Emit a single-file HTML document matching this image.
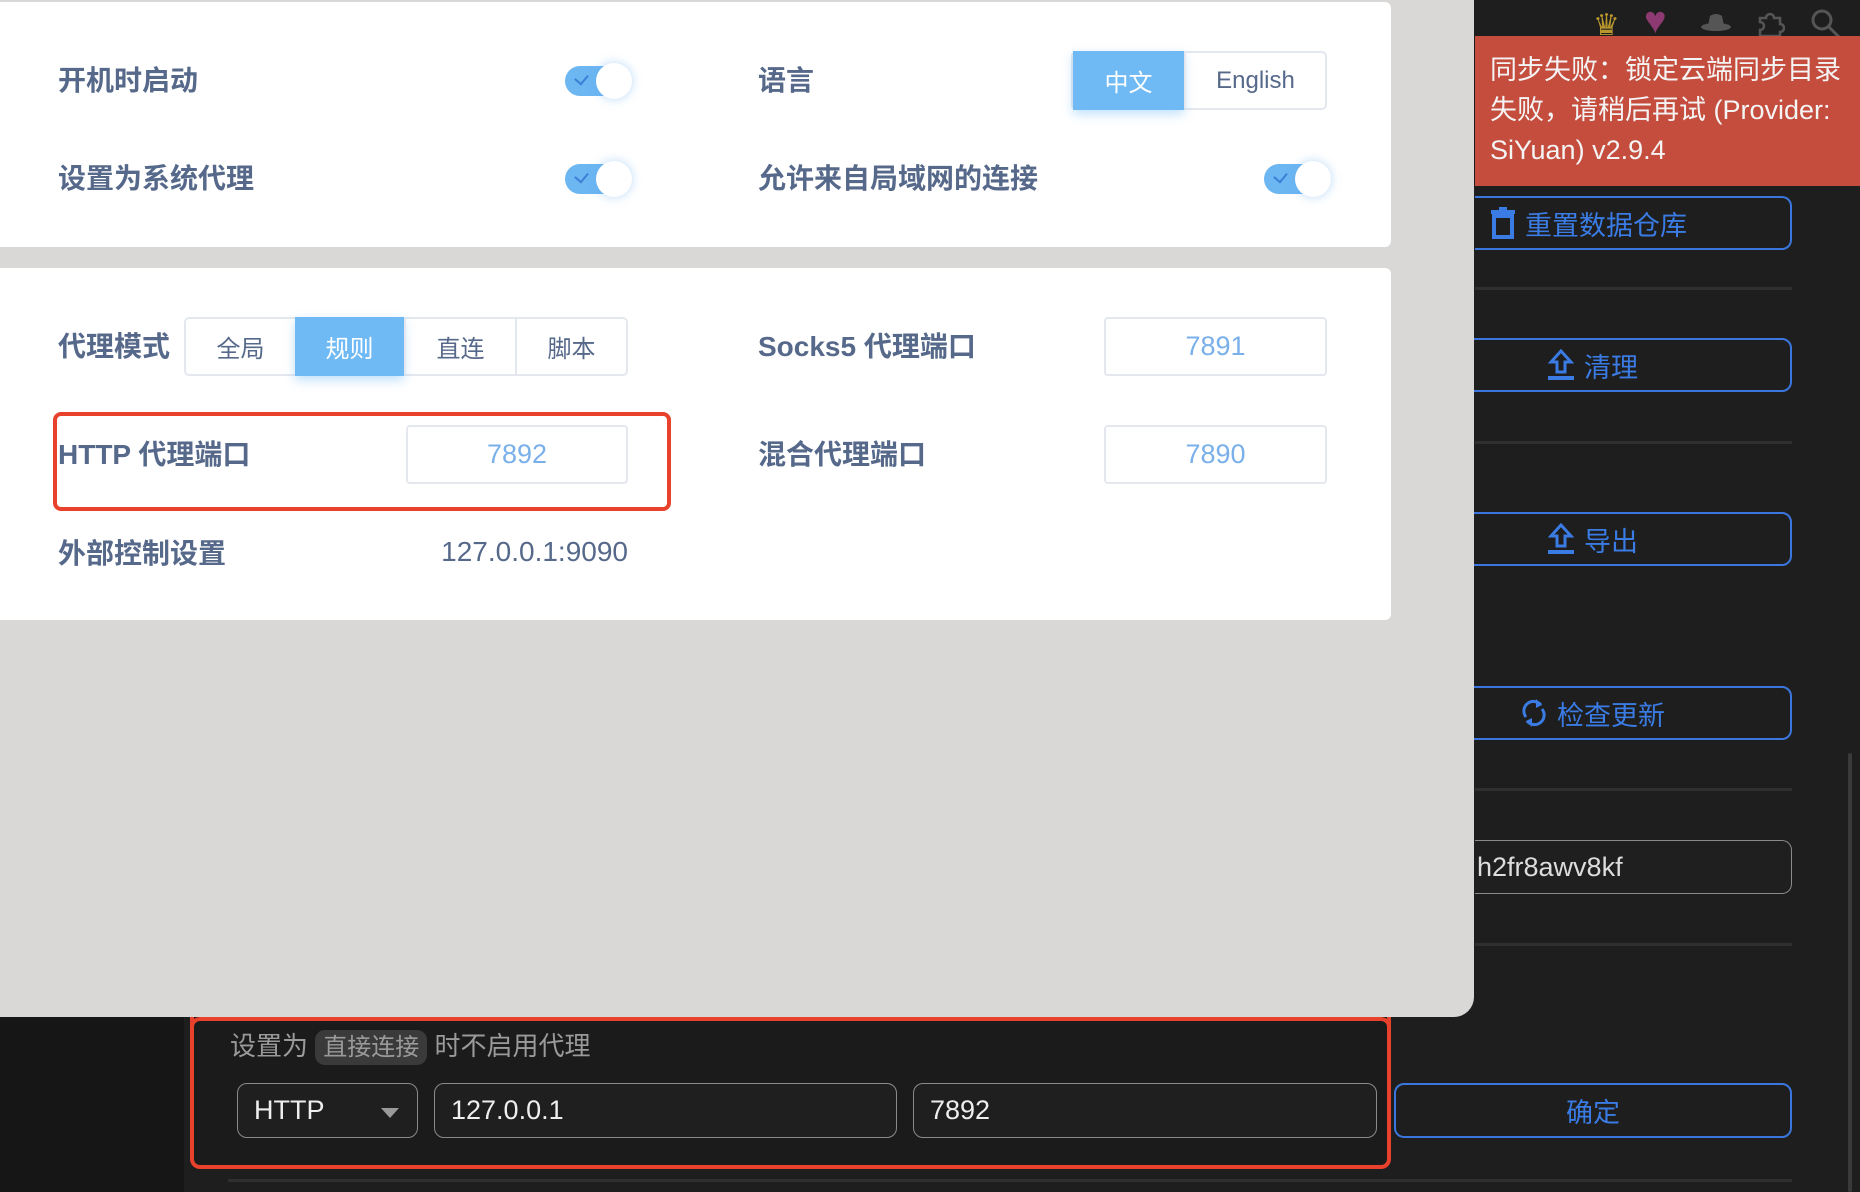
<!DOCTYPE html>
<html><head><meta charset="utf-8"><style>
*{box-sizing:border-box;margin:0;padding:0}
body{width:1860px;height:1192px;overflow:hidden;background:#1e1e1e;font-family:"Liberation Sans","Noto Sans CJK SC",sans-serif;position:relative}
.a{position:absolute}
.panel{left:0;top:0;width:1474px;height:1017px;background:#d9d8d6;border-bottom-right-radius:20px;z-index:2}
.card{background:#fff;left:0;width:1391px;border-radius:0 6px 6px 0;z-index:3}
.z{z-index:4}
.lbl{color:#56698a;font-weight:bold;font-size:28px;line-height:30px;z-index:4}
.tg{width:68px;height:34px;z-index:4}
.tg .tr{position:absolute;left:0;top:3px;width:64px;height:30px;border-radius:15px;background:#6cb6f2}
.tg .kn{position:absolute;left:31px;top:0;width:36px;height:36px;border-radius:50%;background:#fff;box-shadow:0 0 10px rgba(100,170,240,.45)}
.tg .ck{position:absolute;left:12px;top:9px;width:9px;height:12px;border-right:2px solid #3c7fd6;border-bottom:2px solid #3c7fd6;transform:rotate(40deg);transform-origin:center}
.seg{display:flex;border:2px solid #e4e8ee;border-radius:5px;z-index:4}
.seg div{flex:1;text-align:center;color:#56698a;font-size:24px;border-left:2px solid #e4e8ee;display:flex;align-items:center;justify-content:center}
.seg div:first-child{border-left:none}
.seg .on{background:#6fbaf4;color:#fff;box-shadow:0 4px 10px rgba(110,186,244,.45);margin:-2px 0;border:none}
.inp{border:2px solid #e4e8ee;border-radius:4px;color:#7ab0ea;font-size:27px;display:flex;align-items:center;justify-content:center;z-index:4}
.btn{border:2px solid #3a76dd;border-radius:10px;color:#3a7be4;font-size:27px;display:flex;align-items:center;justify-content:center;gap:10px}
.hr{height:3px;background:#2f2f2f}
.din{border:1.5px solid #8a8a8a;border-radius:10px;color:#eee;font-size:27px;display:flex;align-items:center;padding-left:16px;background:#1f1f1f}
</style></head><body>
<div class="a" style="left:0;top:1017px;width:184px;height:175px;background:#161616"></div>
<div class="a panel"></div>
<div class="a card" style="top:2px;height:245px"></div>
<div class="a card" style="top:268px;height:352px"></div>

<div class="a lbl" style="left:58px;top:66px">开机时启动</div>
<div class="a tg" style="left:565px;top:63px"><div class="tr"></div><div class="ck"></div><div class="kn"></div></div>
<div class="a lbl" style="left:58px;top:164px">设置为系统代理</div>
<div class="a tg" style="left:565px;top:161px"><div class="tr"></div><div class="ck"></div><div class="kn"></div></div>
<div class="a lbl" style="left:758px;top:66px">语言</div>
<div class="a seg" style="left:1071px;top:51px;width:256px;height:59px"><div class="on" style="flex:0 0 111px">中文</div><div>English</div></div>
<div class="a lbl" style="left:758px;top:164px">允许来自局域网的连接</div>
<div class="a tg" style="left:1264px;top:161px"><div class="tr"></div><div class="ck"></div><div class="kn"></div></div>

<div class="a lbl" style="left:58px;top:332px">代理模式</div>
<div class="a seg" style="left:184px;top:317px;width:444px;height:59px"><div>全局</div><div class="on">规则</div><div>直连</div><div>脚本</div></div>
<div class="a lbl" style="left:758px;top:332px">Socks5 代理端口</div>
<div class="a inp" style="left:1104px;top:317px;width:223px;height:59px">7891</div>
<div class="a lbl" style="left:58px;top:440px">HTTP 代理端口</div>
<div class="a inp" style="left:406px;top:425px;width:222px;height:59px">7892</div>
<div class="a z" style="left:53px;top:412px;width:618px;height:99px;border:4px solid #e8412c;border-radius:8px"></div>
<div class="a lbl" style="left:758px;top:440px">混合代理端口</div>
<div class="a inp" style="left:1104px;top:425px;width:223px;height:59px">7890</div>
<div class="a lbl" style="left:58px;top:539px">外部控制设置</div>
<div class="a z" style="left:380px;width:248px;text-align:right;top:536px;color:#56698a;font-size:28px">127.0.0.1:9090</div>

<!-- right side -->
<div class="a" style="left:1593px;top:8px;font-size:30px;color:#b8962e">♛</div>
<div class="a" style="left:1644px;top:0px;font-size:38px;color:#8e3a72">♥</div>
<svg class="a" style="left:1700px;top:12px" width="32" height="22" viewBox="0 0 32 22"><path d="M8 14 L10 4 Q16 0 22 4 L24 14Z" fill="#555"/><ellipse cx="16" cy="15" rx="15" ry="4" fill="#555"/></svg>
<svg class="a" style="left:1755px;top:8px" width="30" height="30" viewBox="0 0 30 30"><path d="M5 10h6a4 4 0 1 1 8 0h6v6a4 4 0 1 1 0 8v4H5v-6a4 4 0 1 0 0-8z" fill="none" stroke="#555" stroke-width="2.5"/></svg>
<svg class="a" style="left:1810px;top:8px" width="32" height="30" viewBox="0 0 32 30"><circle cx="12" cy="12" r="9" fill="none" stroke="#555" stroke-width="3"/><path d="M19 19l10 10" stroke="#555" stroke-width="3"/></svg>

<div class="a" style="left:1475px;top:36px;width:385px;height:150px;background:#c44d3d;color:#f4f4f4;font-size:27px;line-height:40px;padding:14px 6px 0 15px;z-index:5">同步失败：锁定云端同步目录失败，请稍后再试 (Provider: SiYuan) v2.9.4</div>

<div class="a btn" style="left:1475px;top:196px;width:317px;height:54px;justify-content:flex-start;padding-left:16px;border-left:none;border-radius:0 10px 10px 0"><svg width="24" height="32" viewBox="0 0 24 32"><rect x="0" y="3" width="24" height="4" fill="#3a7be4"/><rect x="8" y="0" width="8" height="4" fill="#3a7be4"/><rect x="3" y="9" width="18" height="21" fill="none" stroke="#3a7be4" stroke-width="4"/></svg>重置数据仓库</div>
<div class="a hr" style="left:1475px;top:287px;width:317px"></div>
<div class="a btn" style="left:1394px;top:338px;width:398px;height:54px"><svg width="26" height="32" viewBox="0 0 26 32"><path d="M13 2L3 13h6v10h8V13h6z" fill="none" stroke="#3a7be4" stroke-width="3"/><rect x="0" y="27" width="26" height="4" fill="#3a7be4"/></svg>清理</div>
<div class="a hr" style="left:1475px;top:441px;width:317px"></div>
<div class="a btn" style="left:1394px;top:512px;width:398px;height:54px"><svg width="26" height="32" viewBox="0 0 26 32"><path d="M13 2L3 13h6v10h8V13h6z" fill="none" stroke="#3a7be4" stroke-width="3"/><rect x="0" y="27" width="26" height="4" fill="#3a7be4"/></svg>导出</div>
<div class="a btn" style="left:1394px;top:686px;width:398px;height:54px"><svg width="26" height="32" viewBox="0 0 26 32"><path d="M20 8A9 9 0 0 0 5 20M6 24A9 9 0 0 0 21 12" fill="none" stroke="#3a7be4" stroke-width="3"/><path d="M15 2l6 6-6 3zM11 30l-6-6 6-3z" fill="#3a7be4"/></svg>检查更新</div>
<div class="a hr" style="left:1475px;top:788px;width:317px"></div>
<div class="a din" style="left:1475px;top:840px;width:317px;height:54px;padding-left:2px;border-left:none;border-radius:0 10px 10px 0;color:#ddd">h2fr8awv8kf</div>
<div class="a hr" style="left:1475px;top:943px;width:317px"></div>
<div class="a" style="left:1848px;top:753px;width:4px;height:439px;background:#3a3a3a;border-radius:2px"></div>

<!-- bottom -->
<div class="a" style="left:190px;top:1017px;width:1201px;height:152px;border:4px solid #e8412c;border-top:none;border-radius:0 0 10px 10px;background:#1b1b1b"></div>
<div class="a" style="left:190px;top:1017px;width:1201px;height:10px;border-top:4px solid #e8412c;border-left:4px solid #e8412c;border-right:4px solid #e8412c;border-radius:10px 10px 0 0"></div>
<div class="a" style="left:230px;top:1028px;color:#9a9a9a;font-size:26px;line-height:36px;white-space:nowrap">设置为 <span style="background:#3a3a3a;border-radius:10px;padding:4px 8px;font-size:24px">直接连接</span> 时不启用代理</div>
<div class="a din" style="left:237px;top:1083px;width:181px;height:55px">HTTP<span style="position:absolute;right:18px;top:24px;border-left:9px solid transparent;border-right:9px solid transparent;border-top:10px solid #999"></span></div>
<div class="a din" style="left:434px;top:1083px;width:463px;height:55px">127.0.0.1</div>
<div class="a din" style="left:913px;top:1083px;width:464px;height:55px">7892</div>
<div class="a btn" style="left:1394px;top:1083px;width:398px;height:55px">确定</div>
<div class="a hr" style="left:228px;top:1179px;width:1564px"></div>
</body></html>
